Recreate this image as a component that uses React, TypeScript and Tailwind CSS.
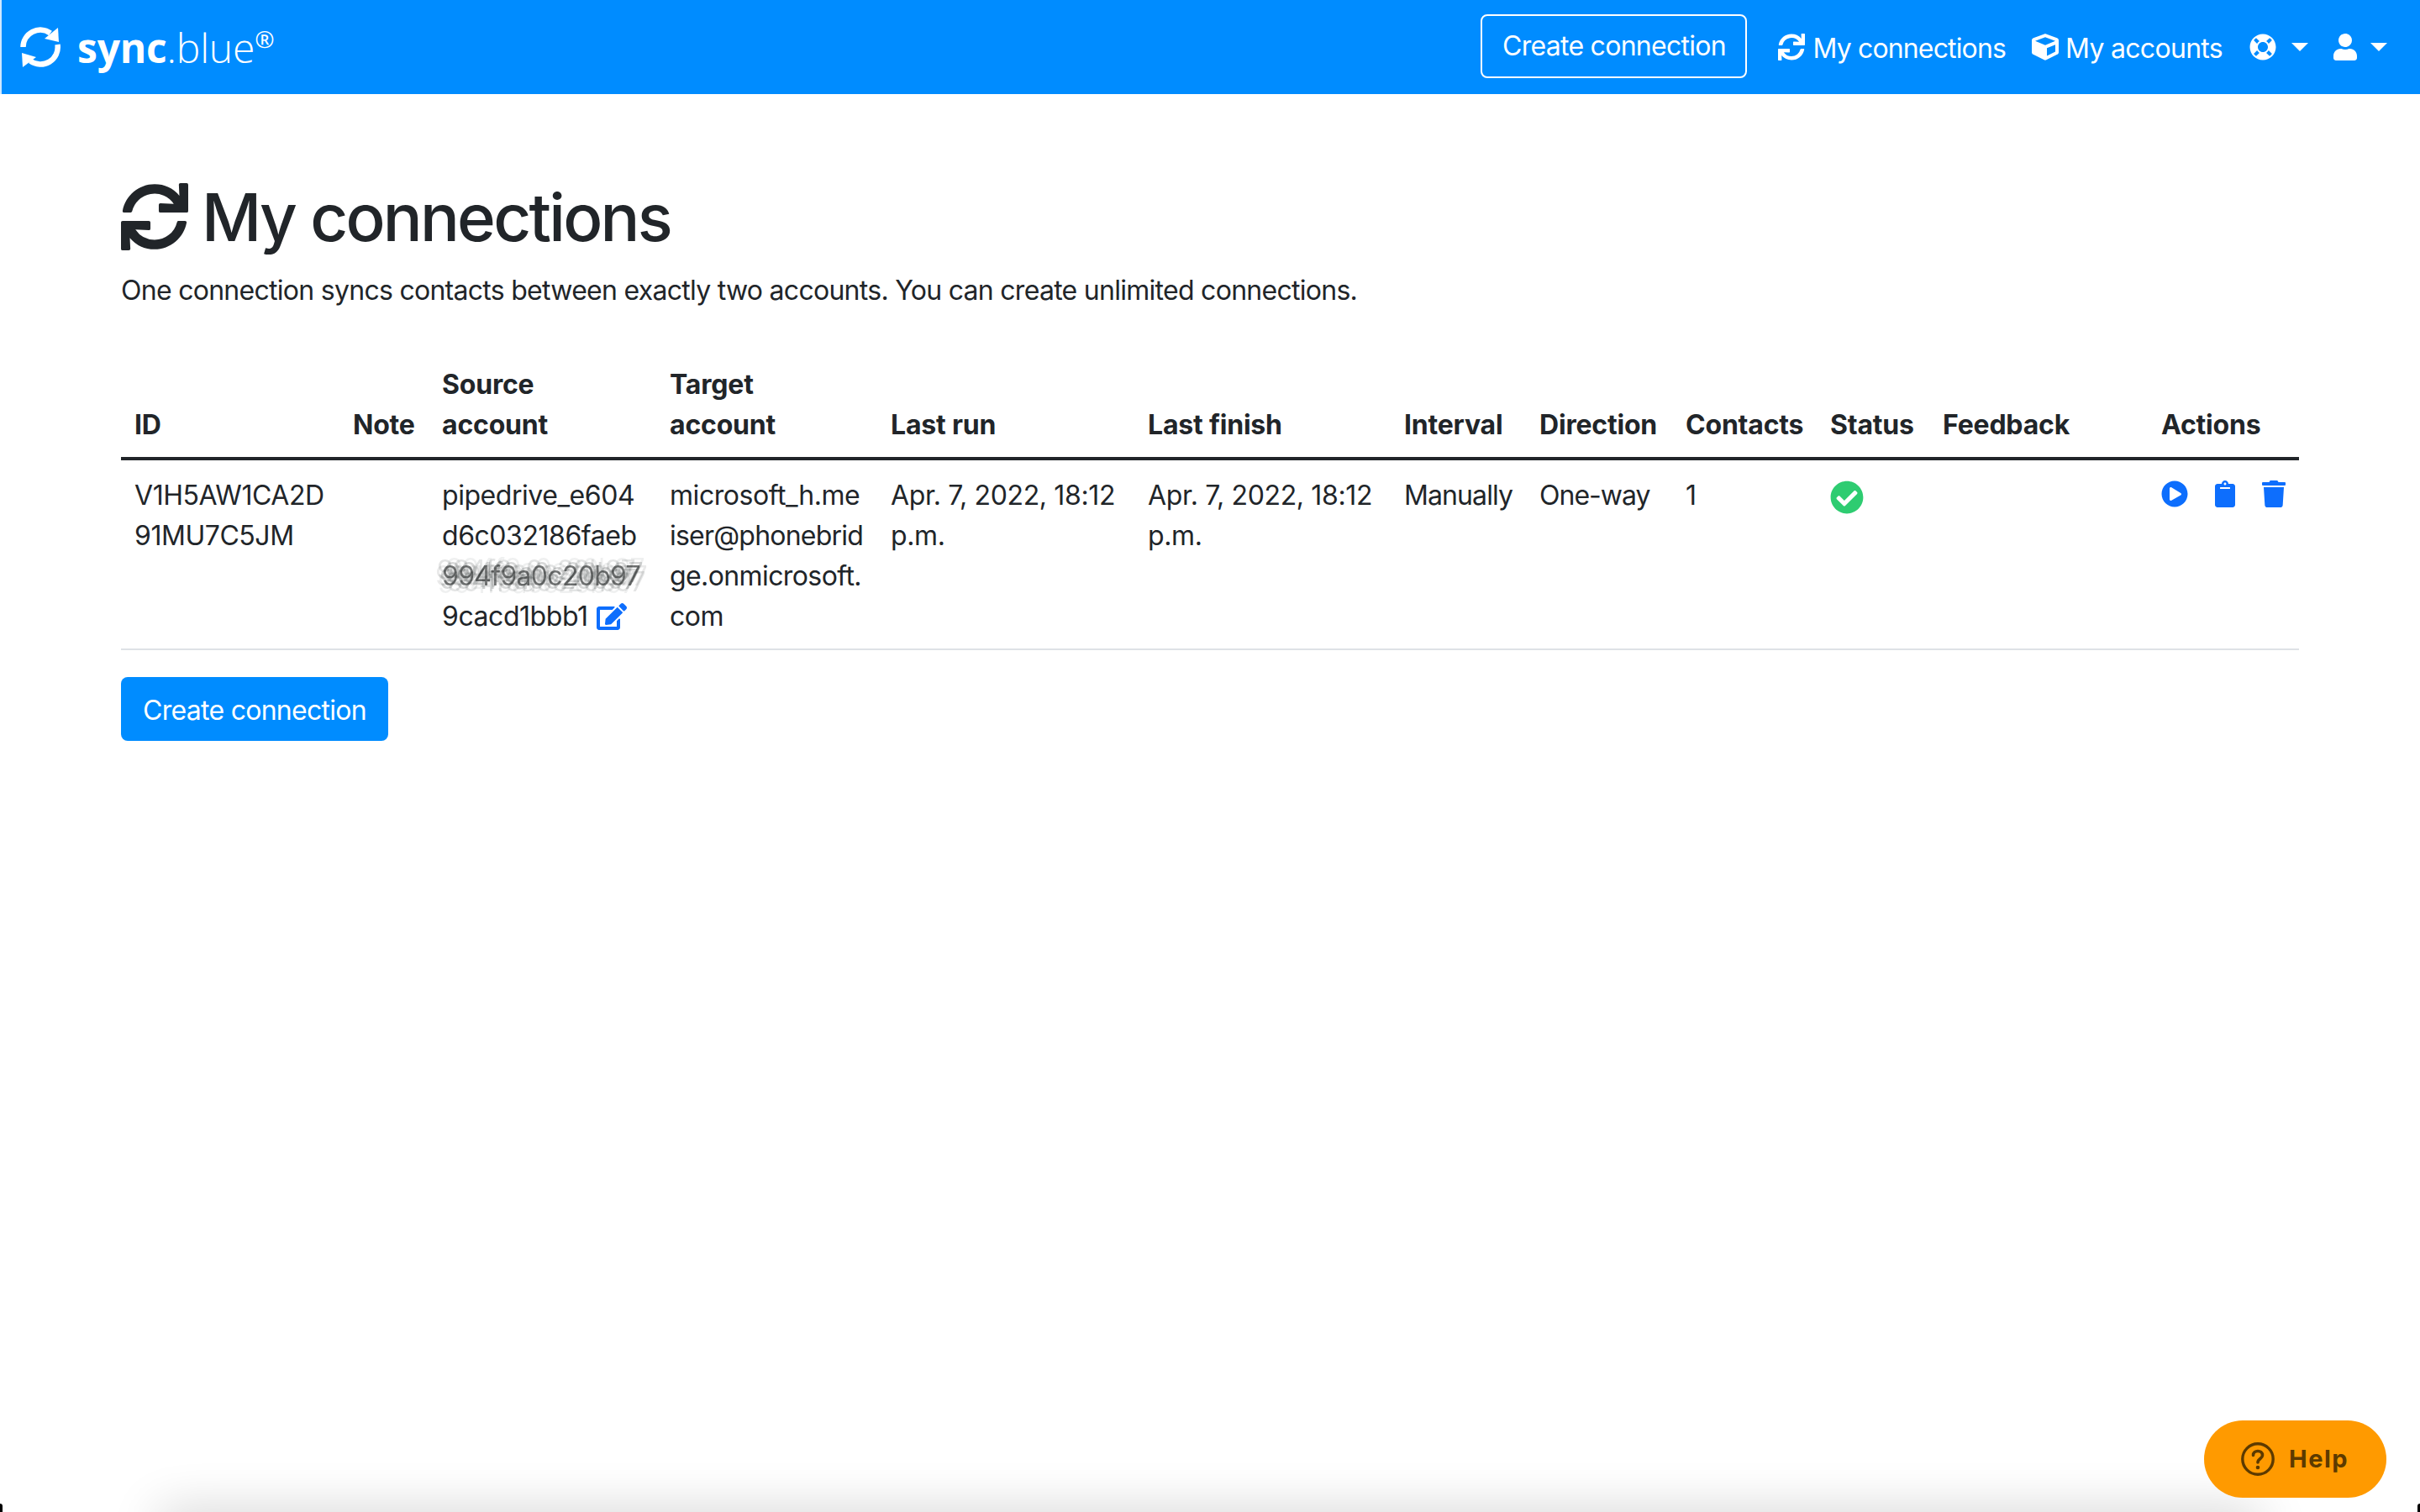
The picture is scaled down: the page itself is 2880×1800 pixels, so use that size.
import React from "react";
import { FaSync, FaCube, FaLifeRing, FaUser, FaEdit, FaPlayCircle, FaClipboard, FaTrash, FaCheckCircle } from "react-icons/fa";

function LogoIcon() {
  return (
    <svg viewBox="0 0 48 48" className="w-[48px] h-[48px] shrink-0" fill="none">
      <path d="M3.5 24 A20.5 20.5 0 0 1 36 7.5" stroke="#fff" strokeWidth="6.5" />
      <polygon points="45,1 46,18 29,14" fill="#fff" />
      <path d="M44.5 21 A20.5 20.5 0 0 1 12 40.5" stroke="#fff" strokeWidth="6.5" />
      <polygon points="3,48 2,31 19,36" fill="#fff" />
    </svg>
  );
}

function Caret() {
  return <span className="w-0 h-0 border-x-[10px] border-x-transparent border-t-[10px] border-t-white" />;
}

const th = "px-4 pb-[14px] pt-[18px] text-left align-bottom font-bold tracking-[-0.2px] border-b-4 border-[#212529]";
const td = "px-4 pt-[18px] pb-[14px] align-top border-b-2 border-[#dee2e6]";

export default function App() {
  return (
    <div className="relative h-[1800px] w-[2880px] overflow-hidden bg-white font-[Inter,sans-serif] text-[32px] leading-[48px] tracking-[-0.45px] text-[#212529]">
      <nav className="flex h-[112px] items-center bg-[#008cff] text-white border-l-[2px] border-l-[#cfe8ff] pr-[39px]">
        <div className="flex items-center ml-[22px]">
          <LogoIcon />
          <span className="ml-[20px] font-['Open_Sans',sans-serif] text-[48px] leading-[56px] tracking-[-0.2px] mt-[2px]">
            <span className="font-bold">sync</span>
            <span className="font-light">.blue</span>
            <sup className="font-normal text-[28px] leading-none align-[18px] top-0">®</sup>
          </span>
        </div>
        <div className="ml-auto flex items-center">
          <button className="flex h-[76px] w-[317px] items-center justify-center rounded-[8px] border-2 border-white -mt-[2px] tracking-[-0.72px]">
            Create connection
          </button>
          <a className="ml-[37px] flex items-center">
            <FaSync className="w-[32px] h-[32px]" />
            <span className="ml-[9px] mt-[3px] tracking-[-0.85px]">My connections</span>
          </a>
          <a className="ml-[31px] flex items-center">
            <FaCube className="w-[32px] h-[32px]" />
            <span className="ml-[8px] mt-[3px] tracking-[-0.7px]">My accounts</span>
          </a>
          <FaLifeRing className="ml-[32px] w-[32px] h-[32px]" />
          <span className="ml-[18px] flex"><Caret /></span>
          <FaUser className="ml-[30px] w-[28px] h-[32px]" />
          <span className="ml-[16px] flex"><Caret /></span>
        </div>
      </nav>

      <main className="px-[144px] pt-[99px]">
        <h1 className="flex items-center text-[78px] leading-[96px] font-medium tracking-[-2.75px]">
          <FaSync className="w-[80px] h-[80px] shrink-0 -mt-[2px]" />
          <span className="ml-[16px]">My connections</span>
        </h1>
        <p className="mt-[15px] mb-[46px] tracking-[-0.72px]">One connection syncs contacts between exactly two accounts. You can create unlimited connections.</p>

        <table className="w-[2592px] table-fixed border-separate border-spacing-0">
          <colgroup>
            <col className="w-[260px]" />
            <col className="w-[106px]" />
            <col className="w-[271px]" />
            <col className="w-[263px]" />
            <col className="w-[306px]" />
            <col className="w-[305px]" />
            <col className="w-[161px]" />
            <col className="w-[174px]" />
            <col className="w-[172px]" />
            <col className="w-[134px]" />
            <col className="w-[260px]" />
            <col className="w-[180px]" />
          </colgroup>
          <thead>
            <tr>
              <th className={th}>ID</th>
              <th className={th}>Note</th>
              <th className={th}>Source<br />account</th>
              <th className={th}>Target<br />account</th>
              <th className={th}>Last run</th>
              <th className={th}>Last finish</th>
              <th className={th}>Interval</th>
              <th className={th}>Direction</th>
              <th className={th}>Contacts</th>
              <th className={th}>Status</th>
              <th className={th}>Feedback</th>
              <th className={th}>Actions</th>
            </tr>
          </thead>
          <tbody>
            <tr>
              <td className={td}>V1H5AW1CA2D<br />91MU7C5JM</td>
              <td className={td}></td>
              <td className={`${td} whitespace-nowrap`}>
                pipedrive_e604<br />
                d6c032186faeb<br />
                <span className="text-[#212525a0] blur-[0.5px] tracking-[-0.7px] [text-shadow:-6px_-7px_0_#21252520,6px_7px_0_#21252520,-3px_4px_0_#2125252e,3px_-4px_0_#2125252e,-8px_0_0_#21252518,8px_0_0_#21252518,-5px_9px_0_#21252512,5px_-9px_0_#21252512]">994f9a0c20b97</span><br />
                <span className="inline-flex items-center">
                  9cacd1bbb1
                  <FaEdit className="ml-[10px] w-[36px] h-[32px] text-[#0d6efd]" />
                </span>
              </td>
              <td className={`${td} whitespace-nowrap`}>
                microsoft_h.me<br />
                <span className="tracking-[-0.78px]">iser@phonebrid</span><br />
                <span className="tracking-[-0.6px]">ge.onmicrosoft.</span><br />
                com
              </td>
              <td className={`${td} whitespace-nowrap tracking-[-0.35px]`}>Apr. 7, 2022, 18:12<br />p.m.</td>
              <td className={`${td} whitespace-nowrap tracking-[-0.35px]`}>Apr. 7, 2022, 18:12<br />p.m.</td>
              <td className={`${td} tracking-[-0.9px]`}>Manually</td>
              <td className={`${td} tracking-[-1px]`}>One-way</td>
              <td className={td}>1</td>
              <td className={td}>
                <FaCheckCircle className="mt-[6px] w-[40px] h-[40px] text-[#2ecc71]" />
              </td>
              <td className={td}></td>
              <td className={td}>
                <div className="flex items-start gap-[32px] pt-[6px] text-[#0d6efd]">
                  <FaPlayCircle className="w-[32px] h-[32px]" />
                  <FaClipboard className="w-[24px] h-[32px]" />
                  <FaTrash className="w-[28px] h-[32px]" />
                </div>
              </td>
            </tr>
          </tbody>
        </table>

        <button className="mt-[32px] flex h-[76px] w-[318px] items-center justify-center rounded-[8px] bg-[#008cff] pt-[3px] text-white tracking-[-0.72px]">
          Create connection
        </button>
      </main>

      <div className="absolute left-[190px] right-[190px] top-[1800px] h-[40px] shadow-[0_0_60px_rgba(0,0,0,0.2)]" />

      <div className="absolute left-0 bottom-0 h-[10px] w-[3px] rounded-tr-[3px] bg-black" />
      <div className="absolute right-0 bottom-0 h-[10px] w-[3px] rounded-tl-[3px] bg-black" />

      <button className="absolute left-[2623px] top-[1691px] flex h-[92px] w-[217px] items-center rounded-full bg-[#ff9a00] pl-[44px] text-[#5c3a00]">
        <svg viewBox="0 0 40 40" className="w-[40px] h-[40px] shrink-0" fill="none" stroke="currentColor">
          <circle cx="20" cy="20" r="18.2" strokeWidth="3.4" />
          <path d="M14.5 15.5 C14.5 8.8 25.5 8.8 25.5 15.5 C25.5 19.5 20 19.5 20 24" strokeWidth="3.6" strokeLinecap="round" />
          <circle cx="20" cy="30" r="2.3" fill="currentColor" stroke="none" />
        </svg>
        <span className="ml-[17px] text-[29px] font-bold tracking-[1.5px]">Help</span>
      </button>
    </div>
  );
}
